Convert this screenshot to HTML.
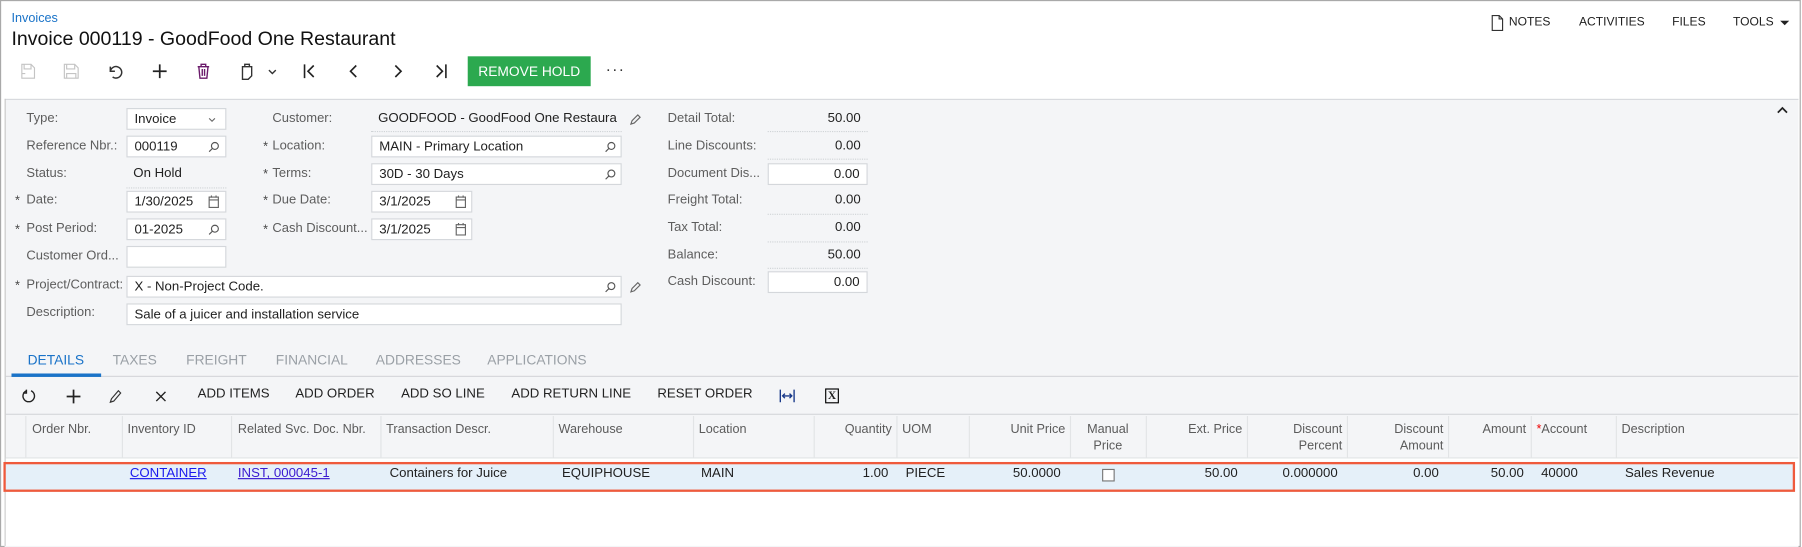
<!DOCTYPE html>
<html><head><meta charset="utf-8">
<style>
html,body{margin:0;padding:0;background:#fff;overflow:hidden;width:1802px;height:547px}
#w{position:absolute;left:0;top:0;width:1568px;height:476px;transform:scale(1.1492);transform-origin:0 0;font-family:"Liberation Sans",sans-serif;font-size:11.5px;color:#212121}
.a{position:absolute;white-space:nowrap}
.frame{position:absolute;left:0;top:0;width:1565px;height:474px;border:1px solid #a9a9a9}
.lbl{position:absolute;color:#5d5d5d;font-size:11.3px;white-space:nowrap}
.req{position:absolute;color:#444;font-size:11px}
.inp{position:absolute;height:19px;background:#fff;border:1px solid #d4d7db;box-sizing:border-box;padding:2px 6px;font-size:11.5px;line-height:14px;white-space:nowrap;overflow:hidden}
.dot{position:absolute;border-bottom:1px dotted #cfd3d6}
.val{position:absolute;text-align:right;width:80px;font-size:11.5px}
.ic{position:absolute}
.tab{position:absolute;top:306px;font-size:12px;color:#9aa0a6}
.tb{position:absolute;top:337px;font-size:11.5px;color:#212121}
.hd{position:absolute;top:367px;font-size:11px;color:#5b5b5b;line-height:14px}
.cl{position:absolute;top:362px;width:1px;height:37px;background:#e2e4e6}
.cell{position:absolute;top:406px;font-size:11.5px}
</style></head><body><div id="w">
<div class="frame"></div>
<div class="a" style="left:10px;top:10px;font-size:11px;color:#1a73c8">Invoices</div>
<div class="a" style="left:10px;top:24px;font-size:17px;color:#111">Invoice 000119 - GoodFood One Restaurant</div>

<svg class="ic" style="left:1297px;top:13px" width="12" height="14" viewBox="0 0 12 14"><path d="M1.5 .5h6l3 3v10h-9z M7.5 .5v3h3" fill="none" stroke="#333"/></svg>
<div class="a" style="left:1313px;top:13px;font-size:10.5px">NOTES</div>
<div class="a" style="left:1374px;top:13px;font-size:10.5px">ACTIVITIES</div>
<div class="a" style="left:1455px;top:13px;font-size:10.5px">FILES</div>
<div class="a" style="left:1508px;top:13px;font-size:10.5px">TOOLS</div>
<svg class="ic" style="left:1549px;top:18px" width="8" height="5"><path d="M0 0h8L4 4z" fill="#222"/></svg>

<svg class="ic" style="left:17px;top:55px" width="14" height="14" viewBox="0 0 14 14" fill="none" stroke="#c4c4c4"><path d="M2 1h8l3 3v9H2zM4 1v4h6V1M2 9h3"/></svg>
<svg class="ic" style="left:55px;top:55px" width="14" height="14" viewBox="0 0 14 14" fill="none" stroke="#c4c4c4"><path d="M1 1h9l3 3v9H1zM3 1v4h7V1M3 13V9h8v4"/></svg>
<svg class="ic" style="left:93px;top:55px" width="14" height="14" viewBox="0 0 14 14" fill="none" stroke="#333" stroke-width="1.3"><path d="M3 3v4h4M3 7a5 5 0 1 1 2 5"/></svg>
<svg class="ic" style="left:132px;top:55px" width="14" height="14" stroke="#222" stroke-width="1.5"><path d="M7 1v12M1 7h12"/></svg>
<svg class="ic" style="left:171px;top:55px" width="12" height="14" viewBox="0 0 12 14" fill="none" stroke="#6a1a6a" stroke-width="1.2"><path d="M1 3h10M4 3V1h4v2M2 3l1 10h6l1-10M5 5v6M7 5v6"/></svg>
<svg class="ic" style="left:209px;top:55px" width="12" height="15" viewBox="0 0 12 15" fill="none" stroke="#333" stroke-width="1.2"><path d="M2 3h8v8l-3 3H2zM4 3V1h4v2"/></svg>
<svg class="ic" style="left:233px;top:60px" width="8" height="5" fill="none" stroke="#333" stroke-width="1.2"><path d="M1 1l3 3 3-3"/></svg>
<svg class="ic" style="left:263px;top:55px" width="12" height="14" fill="none" stroke="#222" stroke-width="1.4"><path d="M2 1v12M10 2L5 7l5 5"/></svg>
<svg class="ic" style="left:303px;top:55px" width="10" height="14" fill="none" stroke="#222" stroke-width="1.4"><path d="M7 2L2 7l5 5"/></svg>
<svg class="ic" style="left:341px;top:55px" width="10" height="14" fill="none" stroke="#222" stroke-width="1.4"><path d="M3 2l5 5-5 5"/></svg>
<svg class="ic" style="left:378px;top:55px" width="12" height="14" fill="none" stroke="#222" stroke-width="1.4"><path d="M10 1v12M2 2l5 5-5 5"/></svg>
<div class="a" style="left:407px;top:49px;width:107px;height:26px;background:#2ca94f;color:#fff;font-size:12px;line-height:26px;text-align:center">REMOVE HOLD</div>
<div class="a" style="left:527px;top:52px;font-size:14px;color:#333;letter-spacing:1px">···</div>

<div class="a" style="left:4px;top:86px;width:1561px;height:389px;background:#f4f5f7;border-top:1px solid #d8dadd"></div>
<div class="a" style="left:4px;top:86px;width:1px;height:389px;background:#c9c9c9"></div>
<svg class="ic" style="left:1546px;top:92px" width="10" height="7" fill="none" stroke="#222" stroke-width="1.5"><path d="M1 6l4-4 4 4"/></svg>

<div class="lbl" style="left:23px;top:97px">Type:</div>
<div class="inp" style="left:110px;top:94px;width:87px">Invoice</div>
<svg class="ic" style="left:181px;top:102px" width="7" height="5" fill="none" stroke="#666"><path d="M1 1l2.5 2.5L6 1"/></svg>
<div class="lbl" style="left:23px;top:121px">Reference Nbr.:</div>
<div class="inp" style="left:110px;top:118px;width:87px">000119</div>
<div class="lbl" style="left:23px;top:145px">Status:</div>
<div class="a" style="left:116px;top:145px">On Hold</div>
<div class="dot" style="left:110px;top:163px;width:87px"></div>
<div class="req" style="left:13px;top:169px">*</div><div class="lbl" style="left:23px;top:168px">Date:</div>
<div class="inp" style="left:110px;top:166px;width:87px">1/30/2025</div>
<div class="req" style="left:13px;top:194px">*</div><div class="lbl" style="left:23px;top:193px">Post Period:</div>
<div class="inp" style="left:110px;top:190px;width:87px">01-2025</div>
<div class="lbl" style="left:23px;top:217px">Customer Ord...</div>
<div class="inp" style="left:110px;top:214px;width:87px"></div>
<div class="req" style="left:13px;top:243px">*</div><div class="lbl" style="left:23px;top:242px">Project/Contract:</div>
<div class="inp" style="left:110px;top:240px;width:431px">X - Non-Project Code.</div>
<div class="lbl" style="left:23px;top:266px">Description:</div>
<div class="inp" style="left:110px;top:264px;width:431px">Sale of a juicer and installation service</div>

<div class="lbl" style="left:237px;top:97px">Customer:</div>
<div class="a" style="left:329px;top:97px;width:208px;overflow:hidden">GOODFOOD - GoodFood One Restaurant</div>
<div class="dot" style="left:323px;top:114px;width:218px"></div>
<div class="req" style="left:229px;top:122px">*</div><div class="lbl" style="left:237px;top:121px">Location:</div>
<div class="inp" style="left:323px;top:118px;width:218px">MAIN - Primary Location</div>
<div class="req" style="left:229px;top:146px">*</div><div class="lbl" style="left:237px;top:145px">Terms:</div>
<div class="inp" style="left:323px;top:142px;width:218px">30D - 30 Days</div>
<div class="req" style="left:229px;top:169px">*</div><div class="lbl" style="left:237px;top:168px">Due Date:</div>
<div class="inp" style="left:323px;top:166px;width:88px">3/1/2025</div>
<div class="req" style="left:229px;top:194px">*</div><div class="lbl" style="left:237px;top:193px">Cash Discount...</div>
<div class="inp" style="left:323px;top:190px;width:88px">3/1/2025</div>

<svg width="0" height="0" style="position:absolute"><defs>
<symbol id="s" viewBox="0 0 10 10"><circle cx="6" cy="4" r="3" fill="none" stroke="#555"/><path d="M4 6L1 9" stroke="#555"/></symbol>
<symbol id="c" viewBox="0 0 10 11"><rect x="1" y="1.5" width="8" height="9" fill="none" stroke="#666"/><path d="M1 4h8M3 0v2M7 0v2" stroke="#666"/></symbol>
<symbol id="p" viewBox="0 0 10 10"><path d="M1 9l1-3 5-5 2 2-5 5z" fill="none" stroke="#666"/></symbol>
</defs></svg>
<svg class="ic" style="left:181px;top:123px" width="10" height="10"><use href="#s"/></svg>
<svg class="ic" style="left:181px;top:195px" width="10" height="10"><use href="#s"/></svg>
<svg class="ic" style="left:526px;top:123px" width="10" height="10"><use href="#s"/></svg>
<svg class="ic" style="left:526px;top:147px" width="10" height="10"><use href="#s"/></svg>
<svg class="ic" style="left:526px;top:245px" width="10" height="10"><use href="#s"/></svg>
<svg class="ic" style="left:181px;top:170px" width="10" height="11"><use href="#c"/></svg>
<svg class="ic" style="left:396px;top:170px" width="10" height="11"><use href="#c"/></svg>
<svg class="ic" style="left:396px;top:194px" width="10" height="11"><use href="#c"/></svg>
<svg class="ic" style="left:548px;top:99px" width="10" height="10"><use href="#p"/></svg>
<svg class="ic" style="left:548px;top:245px" width="10" height="10"><use href="#p"/></svg>

<div class="lbl" style="left:581px;top:97px">Detail Total:</div><div class="val" style="left:669px;top:97px">50.00</div><div class="dot" style="left:668px;top:114px;width:87px"></div>
<div class="lbl" style="left:581px;top:121px">Line Discounts:</div><div class="val" style="left:669px;top:121px">0.00</div><div class="dot" style="left:668px;top:138px;width:87px"></div>
<div class="lbl" style="left:581px;top:145px">Document Dis...</div><div class="inp" style="left:668px;top:142px;width:87px;text-align:right">0.00</div>
<div class="lbl" style="left:581px;top:168px">Freight Total:</div><div class="val" style="left:669px;top:168px">0.00</div><div class="dot" style="left:668px;top:186px;width:87px"></div>
<div class="lbl" style="left:581px;top:192px">Tax Total:</div><div class="val" style="left:669px;top:192px">0.00</div><div class="dot" style="left:668px;top:210px;width:87px"></div>
<div class="lbl" style="left:581px;top:216px">Balance:</div><div class="val" style="left:669px;top:216px">50.00</div><div class="dot" style="left:668px;top:233px;width:87px"></div>
<div class="lbl" style="left:581px;top:239px">Cash Discount:</div><div class="inp" style="left:668px;top:236px;width:87px;text-align:right">0.00</div>

<div class="tab" style="left:24px;color:#1a73c8">DETAILS</div>
<div class="tab" style="left:98px">TAXES</div>
<div class="tab" style="left:162px">FREIGHT</div>
<div class="tab" style="left:240px">FINANCIAL</div>
<div class="tab" style="left:327px">ADDRESSES</div>
<div class="tab" style="left:424px">APPLICATIONS</div>
<div class="a" style="left:5px;top:327px;width:1560px;height:1px;background:#d5d7da"></div>
<div class="a" style="left:10px;top:325px;width:78px;height:3px;background:#1a73c8"></div>

<svg class="ic" style="left:19px;top:338px" width="12" height="14" fill="none" stroke="#222" stroke-width="1.2"><path d="M4 2a5 5 0 1 0 4 0M4 1v3H1"/></svg>
<svg class="ic" style="left:57px;top:338px" width="14" height="14" stroke="#222" stroke-width="1.5"><path d="M7 1v12M1 7h12"/></svg>
<svg class="ic" style="left:95px;top:339px" width="11" height="12" fill="none" stroke="#333"><path d="M1 11l1-3 6-7 2 2-6 7z"/></svg>
<svg class="ic" style="left:135px;top:340px" width="10" height="10" stroke="#222" stroke-width="1.2"><path d="M1 1l8 8M9 1l-8 8"/></svg>
<div class="tb" style="left:172px">ADD ITEMS</div>
<div class="tb" style="left:257px">ADD ORDER</div>
<div class="tb" style="left:349px">ADD SO LINE</div>
<div class="tb" style="left:445px">ADD RETURN LINE</div>
<div class="tb" style="left:572px">RESET ORDER</div>
<svg class="ic" style="left:678px;top:338px" width="14" height="13" fill="none" stroke="#1a3a8a" stroke-width="1.2"><path d="M1 1v11M13 1v11M3 6.5h8M5 4.5l-2 2 2 2M9 4.5l2 2-2 2"/></svg>
<div class="a" style="left:718px;top:338px;width:10px;height:11px;border:1px solid #000;font:bold 10px 'Liberation Serif',serif;line-height:11px;text-align:center">X</div>
<div class="a" style="left:5px;top:360px;width:1560px;height:1px;background:#d5d7da"></div>

<div class="cl" style="left:22px"></div><div class="cl" style="left:106px"></div><div class="cl" style="left:201px"></div><div class="cl" style="left:331px"></div><div class="cl" style="left:481px"></div><div class="cl" style="left:603px"></div><div class="cl" style="left:708px"></div><div class="cl" style="left:780px"></div><div class="cl" style="left:843px"></div><div class="cl" style="left:931px"></div><div class="cl" style="left:997px"></div><div class="cl" style="left:1085px"></div><div class="cl" style="left:1172px"></div><div class="cl" style="left:1260px"></div><div class="cl" style="left:1332px"></div><div class="cl" style="left:1406px"></div>
<div class="hd" style="left:28px">Order Nbr.</div>
<div class="hd" style="left:111px">Inventory ID</div>
<div class="hd" style="left:207px">Related Svc. Doc. Nbr.</div>
<div class="hd" style="left:336px">Transaction Descr.</div>
<div class="hd" style="left:486px">Warehouse</div>
<div class="hd" style="left:608px">Location</div>
<div class="hd" style="left:708px;width:68px;text-align:right">Quantity</div>
<div class="hd" style="left:785px">UOM</div>
<div class="hd" style="left:843px;width:84px;text-align:right">Unit Price</div>
<div class="hd" style="left:938px;text-align:center;width:52px">Manual<br>Price</div>
<div class="hd" style="left:997px;width:84px;text-align:right">Ext. Price</div>
<div class="hd" style="left:1085px;width:83px;text-align:right">Discount<br>Percent</div>
<div class="hd" style="left:1172px;width:84px;text-align:right">Discount<br>Amount</div>
<div class="hd" style="left:1260px;width:68px;text-align:right">Amount</div>
<div class="hd" style="left:1337px"><span style="color:#e00">*</span>Account</div>
<div class="hd" style="left:1411px">Description</div>
<div class="a" style="left:5px;top:398px;width:1560px;height:1px;background:#e2e4e6"></div>

<div class="a" style="left:5px;top:399px;width:1560px;height:76px;background:#fff"></div>
<div class="a" style="left:3px;top:402px;width:1555px;height:22px;background:#e5f0f9;border:2px solid #ef5a3c"></div>
<div class="cell" style="left:113px;color:#1a1aee;text-decoration:underline">CONTAINER</div>
<div class="cell" style="left:207px;color:#3a1ad0;text-decoration:underline">INST, 000045-1</div>
<div class="cell" style="left:339px">Containers for Juice</div>
<div class="cell" style="left:489px">EQUIPHOUSE</div>
<div class="cell" style="left:610px">MAIN</div>
<div class="cell" style="left:708px;width:65px;text-align:right">1.00</div>
<div class="cell" style="left:788px">PIECE</div>
<div class="cell" style="left:843px;width:80px;text-align:right">50.0000</div>
<div class="a" style="left:959px;top:408px;width:9px;height:9px;border:1px solid #777;background:#fff"></div>
<div class="cell" style="left:997px;width:80px;text-align:right">50.00</div>
<div class="cell" style="left:1085px;width:79px;text-align:right">0.000000</div>
<div class="cell" style="left:1172px;width:80px;text-align:right">0.00</div>
<div class="cell" style="left:1260px;width:66px;text-align:right">50.00</div>
<div class="cell" style="left:1341px">40000</div>
<div class="cell" style="left:1414px">Sales Revenue</div>
</div></body></html>
